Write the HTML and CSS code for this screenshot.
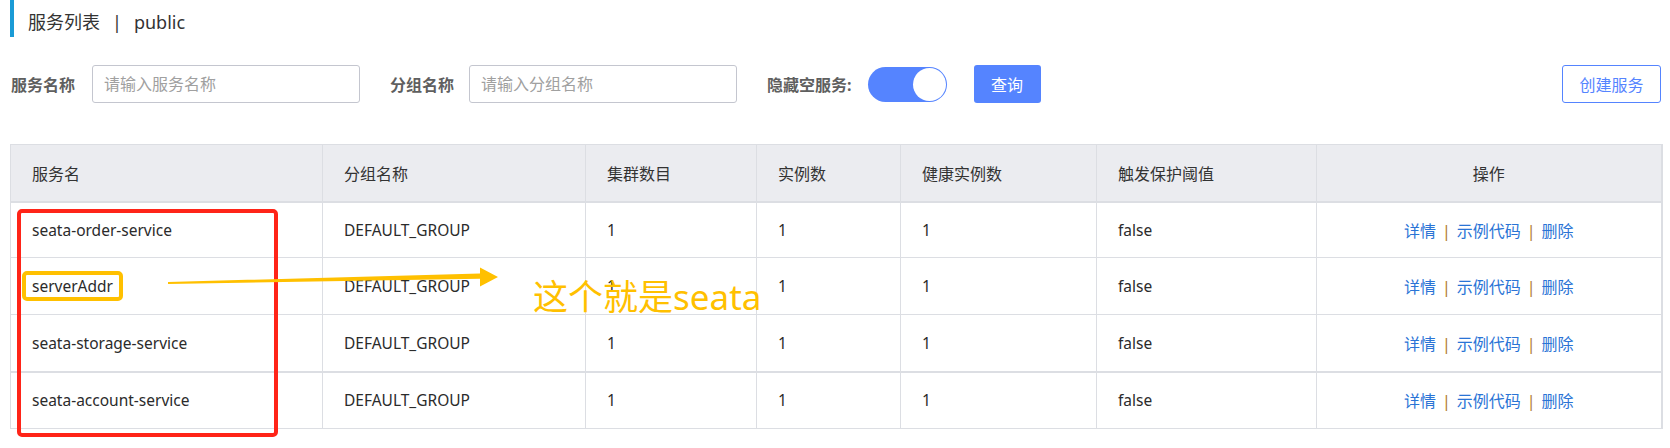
FILE: index.html
```html
<!DOCTYPE html>
<html lang="zh-CN">
<head>
<meta charset="utf-8">
<title>服务列表</title>
<link rel="stylesheet" href="styles.css">
</head>
<body>
<div class="page">
  <div class="title-bar"><span>服务列表</span><span class="title-sep">|</span><span>public</span></div>

  <div class="filters">
    <span class="f-label lbl-1">服务名称</span>
    <input class="f-input" type="text" placeholder="请输入服务名称">
    <span class="f-label lbl-2">分组名称</span>
    <input class="f-input" type="text" placeholder="请输入分组名称">
    <span class="f-label lbl-3">隐藏空服务:</span>
    <span class="switch"><span class="knob"></span></span>
    <button class="btn-primary">查询</button>
    <button class="btn-outline">创建服务</button>
  </div>

  <table class="svc-table">
    <colgroup>
      <col class="c1"><col class="c2"><col class="c3"><col class="c4"><col class="c5"><col class="c6"><col class="c7">
    </colgroup>
    <thead>
      <tr>
        <th>服务名</th><th>分组名称</th><th>集群数目</th><th>实例数</th><th>健康实例数</th><th>触发保护阈值</th><th class="ops">操作</th>
      </tr>
    </thead>
    <tbody>
      <tr>
        <td>seata-order-service</td><td>DEFAULT_GROUP</td><td>1</td><td>1</td><td>1</td><td>false</td>
        <td class="ops"><a class="lnk">详情</a><span class="sep">|</span><a class="lnk">示例代码</a><span class="sep">|</span><a class="lnk">删除</a></td>
      </tr>
      <tr>
        <td>serverAddr</td><td>DEFAULT_GROUP</td><td>1</td><td>1</td><td>1</td><td>false</td>
        <td class="ops"><a class="lnk">详情</a><span class="sep">|</span><a class="lnk">示例代码</a><span class="sep">|</span><a class="lnk">删除</a></td>
      </tr>
      <tr>
        <td>seata-storage-service</td><td>DEFAULT_GROUP</td><td>1</td><td>1</td><td>1</td><td>false</td>
        <td class="ops"><a class="lnk">详情</a><span class="sep">|</span><a class="lnk">示例代码</a><span class="sep">|</span><a class="lnk">删除</a></td>
      </tr>
      <tr class="row-split">
        <td>seata-account-service</td><td>DEFAULT_GROUP</td><td>1</td><td>1</td><td>1</td><td>false</td>
        <td class="ops"><a class="lnk">详情</a><span class="sep">|</span><a class="lnk">示例代码</a><span class="sep">|</span><a class="lnk">删除</a></td>
      </tr>
    </tbody>
  </table>
</div>

<div class="annot">
  <svg class="annot-svg" width="1670" height="448" viewBox="0 0 1670 448">
    <rect x="19" y="211" width="257" height="224" rx="3" fill="none" stroke="#ff2418" stroke-width="4"/>
    <rect x="24" y="273" width="97" height="26" rx="3" fill="none" stroke="#ffc000" stroke-width="4"/>
    <polygon points="168,282 480,273.5 480,267.5 498,277 480,286.5 480,278.8 168,284" fill="#ffc000"/>
  </svg>
  <div class="annot-text">这个就是seata</div>
</div>
</body>
</html>
```

FILE: styles.css
```css
* {
  box-sizing: border-box;
}

html,
body {
  min-height: 448px;
}

body {
  margin: 0;
  position: relative;
  background: #fff;
  color: #333;
  font-family: "Noto Sans", "Noto Sans CJK SC", sans-serif;
}

.page {
  padding: 0 9px 0 10px;
}

/* title */
.title-bar {
  display: flex;
  height: 37px;
  border-left: 4px solid #1a9bd6;
  padding: 8px 0 0 14px;
  font-size: 18px;
  line-height: 29px;
  color: #333;
}

.title-sep {
  margin: 0 12px;
}

/* filters */
.filters {
  display: flex;
  align-items: center;
  height: 38px;
  margin-top: 28px;
  padding-left: 1px;
}

.f-label {
  font-size: 16px;
  font-weight: 700;
  color: #5f5f5f;
  white-space: nowrap;
}

.lbl-1 {
  margin-right: 17px;
}

.lbl-2 {
  margin-left: 30px;
  margin-right: 15px;
}

.lbl-3 {
  margin-left: 30px;
}

.f-input {
  width: 268px;
  height: 38px;
  border: 1px solid #c4c6cf;
  border-radius: 3px;
  padding: 0 11px;
  font-family: "Noto Sans", "Noto Sans CJK SC", sans-serif;
  font-size: 16px;
  color: #333;
  outline: none;
  background: #fff;
}

.f-input::placeholder {
  color: #a0a0a0;
}

.switch {
  display: flex;
  align-items: center;
  justify-content: flex-end;
  width: 79px;
  height: 35px;
  margin-left: 16px;
  padding: 0 1px;
  border-radius: 18px;
  background: #5584ff;
}

.knob {
  width: 33px;
  height: 33px;
  border-radius: 50%;
  background: #fff;
}

.btn-primary {
  width: 67px;
  height: 38px;
  margin-left: 27px;
  border: none;
  border-radius: 3px;
  background: #5584ff;
  color: #fff;
  font-family: "Noto Sans", "Noto Sans CJK SC", sans-serif;
  font-size: 16px;
  padding: 0;
}

.btn-outline {
  width: 99px;
  height: 38px;
  margin-left: auto;
  border: 1px solid #5584ff;
  border-radius: 3px;
  background: #fff;
  color: #5584ff;
  font-family: "Noto Sans", "Noto Sans CJK SC", sans-serif;
  font-size: 16px;
  padding: 0;
}

/* table */
.svc-table {
  width: 1651px;
  margin-top: 41px;
  border-collapse: collapse;
  table-layout: fixed;
  border: 1px solid #dcdee3;
  border-right-width: 2px;
}

.c1 { width: 312px; }
.c2 { width: 263px; }
.c3 { width: 171px; }
.c4 { width: 144px; }
.c5 { width: 196px; }
.c6 { width: 220px; }
.c7 { width: 345px; }

.svc-table th,
.svc-table td {
  border: 1px solid #dcdee3;
  padding: 0 21px;
  text-align: left;
  vertical-align: middle;
  white-space: nowrap;
}

.svc-table th {
  height: 57px;
  background: #ebecf0;
  border-bottom-width: 2px;
  font-size: 16px;
  font-weight: normal;
  color: #333;
}

.svc-table td {
  height: 57px;
  font-size: 15.5px;
  color: #2b2b2b;
}

.svc-table tbody tr:first-child td {
  height: 56px;
}

.svc-table .row-split td {
  border-top-width: 2px;
}

.svc-table .ops {
  text-align: center;
}

.svc-table td.ops {
  font-size: 16px;
}

.lnk {
  color: #2a74d6;
  cursor: pointer;
}

.sep {
  margin: 0 6px;
  color: #b07a2a;
}

/* annotation overlay */
.annot {
  position: absolute;
  left: 0;
  top: 0;
  width: 1670px;
  height: 448px;
  pointer-events: none;
}

.annot-svg {
  position: absolute;
  left: 0;
  top: 0;
}

.annot-text {
  position: absolute;
  left: 533px;
  top: 279px;
  font-size: 35px;
  line-height: 35px;
  color: #ffc000;
  white-space: nowrap;
}
```
